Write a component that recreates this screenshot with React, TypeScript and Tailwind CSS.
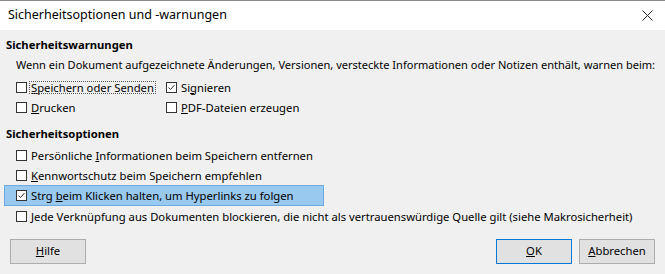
import type { ReactNode } from 'react';

const Box = ({ checked }: { checked?: boolean }) => (
  <span className="w-[11px] h-[11px] border border-[#333333] bg-white flex items-center justify-center shrink-0">
    {checked && (
      <svg width="9" height="9" viewBox="0 0 9 9">
        <path d="M1.5 4.5 L3.5 6.5 L7.5 2" fill="none" stroke="#333" strokeWidth="1" />
      </svg>
    )}
  </span>
);

const Check = ({ checked, children, focus }: { checked?: boolean; children: ReactNode; focus?: boolean }) => (
  <div className="flex items-center gap-[3px] h-5">
    <Box checked={checked} />
    <span className={focus ? 'outline outline-1 outline-dotted outline-[#555] leading-[11px] px-px' : 'leading-[11px] px-px'}>
      {children}
    </span>
  </div>
);

const Btn = ({ children, primary }: { children: ReactNode; primary?: boolean }) => (
  <button
    className={
      'w-[76px] h-[25px] bg-[#e1e1e1] border flex items-center justify-center ' +
      (primary ? 'border-[#0078d7]' : 'border-[#adadad]')
    }
  >
    {children}
  </button>
);

export default function App() {
  return (
    <div
      className="w-[665px] h-[274px] bg-[#f0f0f0] border-t border-[#8a8a8a] flex flex-col text-black text-[11.25px]"
      style={{ fontFamily: '"Noto Sans", sans-serif' }}
    >
      <div className="h-[29px] bg-white flex items-center justify-between pl-2 pr-3">
        <span className="text-[12.5px]">Sicherheitsoptionen und -warnungen</span>
        <svg width="11" height="11" viewBox="0 0 11 11">
          <path d="M0.5 0.5 L10.5 10.5 M10.5 0.5 L0.5 10.5" stroke="#222" strokeWidth="1" />
        </svg>
      </div>

      <div className="flex flex-col pt-[5px] px-[6px]">
        <div className="h-5 flex items-center font-bold">Sicherheitswarnungen</div>
        <div className="pl-[10px] flex flex-col">
          <div className="h-5 flex items-center text-[11.05px] whitespace-nowrap">
            Wenn ein Dokument aufgezeichnete Änderungen, Versionen, versteckte Informationen oder Notizen enthält, warnen beim:
          </div>
          <div className="grid grid-cols-[150px_1fr] mt-[2px]">
            <Check focus>
              <u>S</u>peichern oder Senden
            </Check>
            <Check checked>
              Si<u>g</u>nieren
            </Check>
            <Check>
              <u>D</u>rucken
            </Check>
            <Check>
              <u>P</u>DF-Dateien erzeugen
            </Check>
          </div>
        </div>

        <div className="h-5 flex items-center font-bold mt-[7px]">Sicherheitsoptionen</div>
        <div className="flex flex-col mt-[1px]">
          <div className="pl-[10px]">
            <Check>
              Persönliche <u>I</u>nformationen beim Speichern entfernen
            </Check>
          </div>
          <div className="pl-[10px]">
            <Check>
              <u>K</u>ennwortschutz beim Speichern empfehlen
            </Check>
          </div>
          <div className="w-[320px] -ml-[2px] pl-[11px] bg-[#99c9ef] border border-[#6fa9e0] h-[21px] flex items-center">
            <Check checked>
              Strg <u>b</u>eim Klicken halten, um Hyperlinks zu folgen
            </Check>
          </div>
          <div className="pl-[10px]">
            <Check>
              <u>J</u>ede Verknüpfung aus Dokumenten blockieren, die nicht als vertrauenswürdige Quelle gilt (siehe Makrosicherheit)
            </Check>
          </div>
        </div>
      </div>

      <div className="flex items-center justify-between px-[10px] mt-[13px]">
        <Btn>
          <u>H</u>ilfe
        </Btn>
        <div className="flex gap-[7px]">
          <Btn primary>
            <u>O</u>K
          </Btn>
          <Btn>
            <u>A</u>bbrechen
          </Btn>
        </div>
      </div>
    </div>
  );
}
